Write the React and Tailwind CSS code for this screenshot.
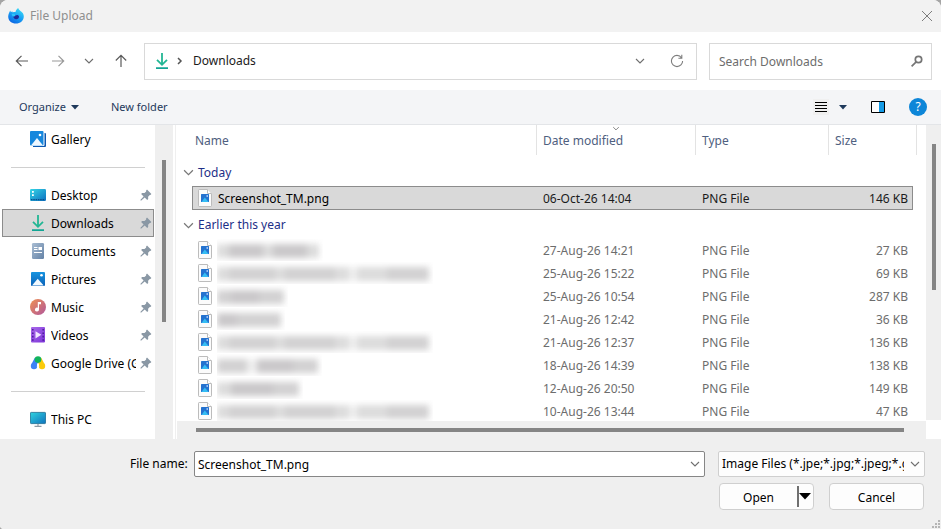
const pinned = [
  { name: 'Desktop', icon: DesktopIcon },
  { name: 'Downloads', icon: DownloadIcon, selected: true },
  { name: 'Documents', icon: DocumentsIcon },
  { name: 'Pictures', icon: PicturesIcon },
  { name: 'Music', icon: MusicIcon },
  { name: 'Videos', icon: VideosIcon },
  { name: 'Google Drive (G:)', icon: DriveIcon },
];

// Each obscured name is a run of smudges: [width, darkness level].
const long = [[12, 1], [46, 2], [10, 1], [50, 2], [14, 1], [8, 0], [30, 1], [42, 2]];
const files = [
  { smudge: [[12, 1], [34, 3], [10, 1], [34, 3], [12, 1]], date: '27-Aug-26 14:21', size: '27 KB' },
  { smudge: long, date: '25-Aug-26 15:22', size: '69 KB' },
  { smudge: [[14, 2], [28, 3], [25, 2]], date: '25-Aug-26 10:54', size: '287 KB' },
  { smudge: [[20, 3], [26, 2], [18, 2]], date: '21-Aug-26 12:42', size: '36 KB' },
  { smudge: long, date: '21-Aug-26 12:37', size: '136 KB' },
  { smudge: [[30, 2], [10, 0], [36, 3], [25, 2]], date: '18-Aug-26 14:39', size: '138 KB' },
  { smudge: [[14, 1], [42, 3], [26, 2]], date: '12-Aug-26 20:50', size: '149 KB' },
  { smudge: long, date: '10-Aug-26 13:44', size: '47 KB' },
];

const shades = ['bg-[#efefef]', 'bg-[#dcdcdc]', 'bg-[#d2d1d2]', 'bg-[#cac8ca]'];

function Chevron({ className = 'h-[10px] w-[10px]', stroke = '#6f6f6f' }) {
  return (
    <svg viewBox="0 0 10 10" className={className} fill="none" stroke={stroke} strokeWidth="1.1">
      <path d="M1 3l4 4 4-4" />
    </svg>
  );
}

function FirefoxIcon() {
  return (
    <svg viewBox="0 0 16 16" className="h-4 w-4">
      <defs>
        <linearGradient id="ff" x1="0.8" y1="0" x2="0.2" y2="1">
          <stop offset="0" stopColor="#3fe0f5" />
          <stop offset="0.5" stopColor="#18a0f5" />
          <stop offset="1" stopColor="#0a5fe0" />
        </linearGradient>
      </defs>
      <path d="M10.2 0c.3 1.200 1 1.800 2 2.700C14.500 4.300 16 6 15.800 8.800 15.500 13 12.200 15.600 8 15.600S.2 13 .2 8.500C.2 6 1.200 4.500 2.200 2.400l.7 1.900 1.300-1.100.6 1.300C5.500 4 6.300 3.900 7.500 4c.3-1.700 1.400-3 2.700-4z" fill="url(#ff)" />
      <path d="M5.200 7.500c.8-.5 1.800-.4 2.500.1 1-1 3-.5 3.300 1 .2 1.600-1.200 2.700-2.800 2.700-1.700 0-3-1.300-3-3.800z" fill="#1f2a98" />
      <path d="M3.700 6.200c1.600-.8 3-.4 3.700 1-.2.900-1 1.200-2 1.300-.9-.3-1.500-1-1.700-2.300z" fill="#2fc4f9" />
    </svg>
  );
}

function Arrow({ dir = 'left', stroke = '#5a5a5a' }) {
  const d = {
    left: 'M13 7H1.500M6.500 1.800L1.300 7l5.200 5.200',
    right: 'M1 7h11.500M7.500 1.800L12.700 7l-5.200 5.200',
    up: 'M7 13V1.500M1.800 6.500L7 1.300l5.200 5.200',
  }[dir];
  return (
    <svg viewBox="0 0 14 14" className="h-[14px] w-[14px]" fill="none" stroke={stroke} strokeWidth="1.2">
      <path d={d} />
    </svg>
  );
}

function DownloadIcon() {
  return (
    <svg viewBox="0 0 16 16" className="h-4 w-4" fill="none" stroke="#22b694" strokeWidth="1.8">
      <path d="M8 0v11.500M3 6.800l5 5 5-5" />
      <path d="M2 15.200h12" stroke="#12a594" />
    </svg>
  );
}

function GalleryIcon() {
  return (
    <svg viewBox="0 0 16 16" className="h-4 w-4">
      <path d="M4 2h11a1 1 0 011 1v12a1 1 0 01-1 1H3z" fill="#0b57b0" />
      <rect width="14.500" height="15" rx="1" fill="#fff" />
      <rect width="13.500" height="14.500" rx="1" fill="#1687dd" />
      <path d="M1 14.500L7 7l6 7.500z" fill="#eef7ff" />
      <circle cx="10" cy="4" r="1.300" fill="#fff" />
    </svg>
  );
}

function DesktopIcon() {
  return (
    <svg viewBox="0 0 16 16" className="h-4 w-4">
      <defs>
        <linearGradient id="desk" x1="0" y1="0" x2="1" y2="1">
          <stop offset="0" stopColor="#35d6e6" />
          <stop offset="1" stopColor="#0d6fc0" />
        </linearGradient>
      </defs>
      <rect y="2" width="16" height="12" rx="1.200" fill="url(#desk)" />
      <path d="M2 4h1.800v1.800H2zM2 7.200h1.800V9H2z" fill="#fff" />
      <path d="M1 12.600h14" stroke="#094f8c" strokeWidth="1.200" strokeDasharray="1.500 .8" />
    </svg>
  );
}

function DocumentsIcon() {
  return (
    <svg viewBox="0 0 16 16" className="h-4 w-4">
      <defs>
        <linearGradient id="docs" x1="0" y1="0" x2="1" y2="1">
          <stop offset="0" stopColor="#a9bdd3" />
          <stop offset="1" stopColor="#6482a6" />
        </linearGradient>
      </defs>
      <rect x="2" y="0" width="12" height="16" rx="1.200" fill="url(#docs)" />
      <path d="M4 4.500h3.500M4 6.500h3.500M4 9.500h8" stroke="#fff" strokeWidth="1" />
      <path d="M8.500 4H12v3H8.500z" fill="#fff" />
    </svg>
  );
}

function PicturesIcon() {
  return (
    <svg viewBox="0 0 16 16" className="h-4 w-4">
      <defs>
        <linearGradient id="pics" x1="0" y1="0" x2="0" y2="1">
          <stop offset="0" stopColor="#1794e0" />
          <stop offset="1" stopColor="#0b62b8" />
        </linearGradient>
      </defs>
      <rect x="1" y="1" width="14" height="14" rx="1" fill="url(#pics)" />
      <path d="M2 14.500l5.700-6.800 6 6.800z" fill="#f3faff" />
      <circle cx="11.500" cy="4.300" r="1.300" fill="#fff" />
    </svg>
  );
}

function MusicIcon() {
  return (
    <svg viewBox="0 0 16 16" className="h-4 w-4">
      <defs>
        <linearGradient id="music" x1="0" y1="0" x2="1" y2="1">
          <stop offset="0" stopColor="#f09252" />
          <stop offset="1" stopColor="#b0569b" />
        </linearGradient>
      </defs>
      <circle cx="8" cy="8" r="8" fill="url(#music)" />
      <path d="M7.800 3h3.200v2.200H9v5.300a2 2 0 11-1.200-1.800z" fill="#fff" />
    </svg>
  );
}

function VideosIcon() {
  return (
    <svg viewBox="0 0 16 16" className="h-4 w-4">
      <defs>
        <linearGradient id="vids" x1="0" y1="0" x2="1" y2="1">
          <stop offset="0" stopColor="#a868ea" />
          <stop offset="1" stopColor="#7d35d8" />
        </linearGradient>
      </defs>
      <rect x="1" y="0" width="14" height="15.500" rx="1" fill="url(#vids)" />
      <path d="M2.800 2v12M13.200 2v12" stroke="#4f1f9c" strokeWidth="1.600" strokeDasharray="1.600 1.800" />
      <path d="M5.500 4.200l5.800 3.600-5.800 3.600z" fill="#f1e6ff" />
    </svg>
  );
}

function DriveIcon() {
  return (
    <svg viewBox="0 0 16 16" className="h-4 w-4">
      <path d="M7 4L3.900 10" stroke="#3c82f6" strokeWidth="5" />
      <circle cx="4" cy="11" r="3.200" fill="#3c82f6" />
      <path d="M9 4l3.100 6" stroke="#fbcb0a" strokeWidth="5" />
      <circle cx="12" cy="11" r="3.200" fill="#fbcb0a" />
      <path d="M8 8l1.300 3.500H6.700z" fill="#fff" />
      <circle cx="8" cy="4.600" r="3.300" fill="#12b45b" />
    </svg>
  );
}

function PcIcon() {
  return (
    <svg viewBox="0 0 16 16" className="h-4 w-4">
      <defs>
        <linearGradient id="pc" x1="0" y1="0" x2="1" y2="1">
          <stop offset="0" stopColor="#2fd3df" />
          <stop offset="1" stopColor="#0f72bd" />
        </linearGradient>
      </defs>
      <rect x=".4" y="1.400" width="15.200" height="11.200" rx=".8" fill="url(#pc)" stroke="#17698f" strokeWidth=".8" />
      <path d="M8 13v2M4.500 15.400h7" stroke="#8d9aa5" strokeWidth="1.200" />
    </svg>
  );
}

function PinIcon() {
  return (
    <svg viewBox="0 0 12 12" className="h-3 w-3 shrink-0" fill="#8a98a5">
      <path d="M7 .6l4.400 4.400-1 1-.6-.1-1.700 1.800.1 2.300-1 1L4.700 8.500 1 11.800l-.7-.7 3.300-3.600L1.100 5l1-1 2.400.1 1.700-1.700-.2-.7z" />
    </svg>
  );
}

function PngIcon() {
  return (
    <svg viewBox="0 0 14 18" className="h-[18px] w-[14px] shrink-0">
      <path d="M.5 1.200c0-.4.3-.7.7-.7h8l4.300 4.300v12c0 .4-.3.7-.7.7H1.200c-.4 0-.7-.3-.7-.7z" fill="#fbfbfb" stroke="#bcbcbc" />
      <path d="M9.500.5v4h4" fill="#fff" stroke="#bcbcbc" />
      <rect x="3" y="5" width="8" height="8" rx=".6" fill="#2472cf" />
      <path d="M3.500 13L6.800 8.500l3.800 4.500z" fill="#35bdf3" />
      <path d="M8.500 6.300H10v1.400H8.500z" fill="#c7dcff" />
    </svg>
  );
}

function SideItem({ icon: Icon, name, selected, pin }) {
  return (
    <li className="pl-[2px] pr-px">
      <button
        className={
          'flex h-7 w-full items-center border pl-[27px] pr-px text-left ' +
          (selected ? 'border-[#8c8c8c] bg-[#d9d9d9]' : 'border-transparent')
        }
      >
        <Icon />
        <span className="ml-[5px] mr-1 min-w-0 flex-1 overflow-hidden whitespace-nowrap pt-[2px]">{name}</span>
        {pin && <PinIcon />}
      </button>
    </li>
  );
}

function GroupRow({ children, className }) {
  return (
    <tr>
      <th colSpan={6} className={'p-0 pl-[6px] text-left font-normal text-[#1d2f87] ' + className}>
        <button className="flex items-center gap-1">
          <Chevron className="h-[11px] w-[11px]" stroke="#777" />
          {children}
        </button>
      </th>
    </tr>
  );
}

export default function App() {
  return (
    <div className="h-screen bg-[#a5a5a5] font-['Noto_Sans','Open_Sans',sans-serif] text-[12px] leading-4 text-black">
      <div className="flex h-full flex-col overflow-hidden rounded-t-lg rounded-bl bg-white">
        <header className="flex h-8 shrink-0 items-center bg-[#f2f2f2] pl-2 pr-[6px]">
          <FirefoxIcon />
          <h1 className="ml-[6px] flex-1 text-[#8f8f8f]">File Upload</h1>
          <button aria-label="Close" className="flex h-4 w-4 items-center justify-center">
            <svg viewBox="0 0 12 12" className="h-3 w-3" stroke="#7d7d7d" strokeWidth="1"><path d="M1 1l10 10M11 1L1 11" /></svg>
          </button>
        </header>

        <nav className="flex h-[58px] shrink-0 items-center pl-[15px] pr-[9px]">
          <button aria-label="Back"><Arrow /></button>
          <button aria-label="Forward" className="ml-[22px]"><Arrow dir="right" stroke="#9a9a9a" /></button>
          <button aria-label="Recent locations" className="ml-[19px]"><Chevron /></button>
          <button aria-label="Up" className="ml-[20px]"><Arrow dir="up" /></button>
          <div className="ml-4 flex h-[37px] min-w-0 flex-1 items-center border border-[#d9d9d9] pl-[9px] pr-3">
            <DownloadIcon />
            <svg viewBox="0 0 6 8" className="ml-[7px] h-2 w-[6px]" fill="none" stroke="#555" strokeWidth="1.500"><path d="M1 1l3 3-3 3" /></svg>
            <button className="ml-[10px] text-[#1b1b1b]">Downloads</button>
            <span className="flex-1" />
            <button aria-label="Previous locations"><Chevron /></button>
            <button aria-label="Refresh" className="ml-[25px]">
              <svg viewBox="0 0 14 14" className="h-[14px] w-[14px]" fill="none" stroke="#7d7d7d" strokeWidth="1.100">
                <path d="M12.600 7A5.600 5.600 0 117 1.400c2 0 3.600 1 4.600 2.600M11.800.8v3.400H8.400" />
              </svg>
            </button>
          </div>
          <div className="ml-3 flex h-[37px] w-[223px] items-center border border-[#d9d9d9] pl-[9px] pr-2">
            <input aria-label="Search Downloads" placeholder="Search Downloads" className="min-w-0 flex-1 pt-[2px] outline-none placeholder:text-[#6d6d6d]" />
            <svg viewBox="0 0 12 12" className="h-3 w-3" fill="none" stroke="#757575" strokeWidth="1.700"><circle cx="7.500" cy="4.500" r="3.200" /><path d="M5.200 6.800L.6 11.400" /></svg>
          </div>
        </nav>

        <div className="flex h-[35px] shrink-0 items-center border-b border-[#e3e5e8] bg-[#f4f5f7] pl-[19px] pr-[14px] text-[11px] text-[#1e395b]">
          <button className="flex items-center gap-[5px]">
            Organize
            <svg viewBox="0 0 8 5" className="h-[5px] w-2" fill="#1e395b"><path d="M0 0h8L4 4.500z" /></svg>
          </button>
          <button className="ml-8">New folder</button>
          <span className="flex-1" />
          <button aria-label="View" className="flex h-4 w-4 items-center justify-center bg-[#f0f0f0]">
            <svg viewBox="0 0 12 11" className="h-[11px] w-3" stroke="#000"><path d="M0 .5h12M0 3.500h12M0 6.500h12M0 9.500h12" /></svg>
          </button>
          <button aria-label="More view options" className="ml-[10px]">
            <svg viewBox="0 0 8 5" className="h-[5px] w-2" fill="#1e395b"><path d="M0 0h8L4 4.500z" /></svg>
          </button>
          <button aria-label="Preview pane" className="ml-[24px]">
            <svg viewBox="0 0 14 12" className="h-3 w-[14px]"><path d="M.5.5h13v11H.5z" fill="#fff" stroke="#000" /><path d="M8 1h5v10H8z" fill="#159be6" /></svg>
          </button>
          <button aria-label="Help" className="ml-6 flex h-[18px] w-[18px] items-center justify-center rounded-full bg-[#0d86d8] text-[12px] text-white">?</button>
        </div>

        <main className="flex min-h-0 flex-1">
          <aside className="w-[155px] shrink-0 overflow-hidden">
            <ul>
              <SideItem icon={GalleryIcon} name="Gallery" />
              <li className="flex h-7 items-center pl-[11px] pr-[10px]"><hr className="w-full border-[#d0d0d0]" /></li>
              {pinned.map((p) => <SideItem key={p.name} {...p} pin />)}
              <li className="flex h-7 items-center pl-[11px] pr-[10px]"><hr className="w-full border-[#d0d0d0]" /></li>
              <SideItem icon={PcIcon} name="This PC" />
            </ul>
          </aside>
          <div className="flex w-[18px] shrink-0 justify-center bg-[#efefef] pt-[35px]">
            <div className="h-[162px] w-1 bg-[#858585]" />
          </div>
          <div className="mr-px w-[3px] shrink-0 border-r border-[#efefef]" />

          <section className="flex min-w-0 flex-1 flex-col">
            <div className="min-h-0 flex-1 overflow-hidden pr-[9px]">
              <table className="w-full table-fixed border-separate border-spacing-0">
                <colgroup>
                  <col className="w-[15px]" />
                  <col />
                  <col className="w-[159px]" />
                  <col className="w-[133px]" />
                  <col className="w-[84px]" />
                  <col className="w-1" />
                </colgroup>
                <thead>
                  <tr className="h-[30px] text-left text-[#4f6080]">
                    <th className="p-0" />
                    <th className="border-r border-[#e3e3e3] p-0 pl-[3px] pt-[2px] font-normal">Name</th>
                    <th className="relative border-r border-[#e3e3e3] p-0 pl-[6px] pt-[2px] font-normal">
                      Date modified
                      <span className="absolute left-1/2 top-0 -translate-x-1/2"><Chevron className="h-[7px] w-[7px]" stroke="#666" /></span>
                    </th>
                    <th className="border-r border-[#e3e3e3] p-0 pl-[6px] pt-[2px] font-normal">Type</th>
                    <th className="p-0 pl-[6px] pt-[2px] font-normal">Size</th>
                    <th className="border-r border-[#e3e3e3] p-0" />
                  </tr>
                </thead>
                <tbody>
                  <GroupRow className="h-[31px] pt-1">Today</GroupRow>
                  <tr className="h-6 text-[#1b1b1b] [&>.sel]:border-y [&>.sel]:border-[#8c8c8c] [&>.sel]:bg-[#d9d9d9]">
                    <td className="p-0" />
                    <td className="sel border-l p-0 pl-[5px]">
                      <div className="flex items-center gap-[6px] text-black"><PngIcon /><span className="pt-[2px]">Screenshot_TM.png</span></div>
                    </td>
                    <td className="sel p-0 pl-[6px] pt-[2px]">06-Oct-26 14:04</td>
                    <td className="sel p-0 pl-[6px] pt-[2px]">PNG File</td>
                    <td className="sel border-r p-0 pr-1 pt-[2px] text-right">146 KB</td>
                    <td className="p-0" />
                  </tr>
                  <GroupRow className="h-[28px] pt-[2px]">Earlier this year</GroupRow>
                  {files.map((f) => (
                    <tr key={f.date} className="h-[23px] text-[#6d6d6d]">
                      <td className="p-0" />
                      <td className="p-0 pl-[6px]">
                        <div className="flex items-center gap-[5px]">
                          <PngIcon />
                          <span className="overflow-hidden pb-[2px] pr-1 pt-1">
                            <span className="flex h-[16px] items-center blur-[3px]">
                              {f.smudge.map(([w, level], i) => (
                                <span key={i} className={'h-[14px] ' + shades[level]} style={{ width: w }} />
                              ))}
                            </span>
                          </span>
                        </div>
                      </td>
                      <td className="p-0 pl-[6px] pt-[2px]">{f.date}</td>
                      <td className="p-0 pl-[6px] pt-[2px]">PNG File</td>
                      <td className="p-0 pr-[5px] pt-[2px] text-right">{f.size}</td>
                      <td className="p-0" />
                    </tr>
                  ))}
                </tbody>
              </table>
            </div>
            <div className="flex h-[18px] shrink-0 items-center bg-[#efefef] pl-[19px] pr-[22px]">
              <div className="h-1 w-full bg-[#858585]" />
            </div>
          </section>
          <div className="mb-[19px] flex w-[15px] shrink-0 justify-center bg-[#efefef] pl-px pt-[19px]">
            <div className="h-[146px] w-1 bg-[#858585]" />
          </div>
        </main>

        <footer className="relative shrink-0 bg-[#efefef] pb-[19px] pl-[130px] pr-4 pt-3">
          <div className="flex items-center">
            <label htmlFor="filename" className="w-16 whitespace-nowrap">File name:</label>
            <div className="flex h-[26px] min-w-0 flex-1 items-center rounded-xs border border-[#868686] bg-white pl-[3px] pr-1">
              <input id="filename" defaultValue="Screenshot_TM.png" className="min-w-0 flex-1 pt-[2px] outline-none" />
              <button aria-label="Recent file names"><Chevron /></button>
            </div>
            <div className="relative ml-[13px] w-[207px]">
              <select aria-label="File type" className="block h-[26px] w-full appearance-none rounded-xs border border-[#cfcfcf] bg-[#fdfdfd] pl-[3px] pr-5 outline-none">
                <option>Image Files (*.jpe;*.jpg;*.jpeg;*.gif;*.png)</option>
              </select>
              <span className="pointer-events-none absolute right-[5px] top-2"><Chevron /></span>
            </div>
          </div>
          <div className="mt-[6px] flex justify-end gap-[15px] pr-px">
            <div className="flex h-[27px] w-[95px] items-center rounded border border-[#cfcfcf] bg-[#fdfdfd]">
              <button className="flex-1 pt-[2px]">Open</button>
              <button aria-label="Open options" className="flex h-[21px] w-4 items-center border-l-2 border-[#707070]">
                <svg viewBox="0 0 12 7" className="h-[7px] w-3"><path d="M0 0h12L6 6.500z" /></svg>
              </button>
            </div>
            <button className="h-[27px] w-[95px] rounded border border-[#cfcfcf] bg-[#fdfdfd] pt-[2px]">Cancel</button>
          </div>
          <svg viewBox="0 0 9 9" className="absolute bottom-0 right-0 h-[9px] w-[9px]" fill="#b5b5b5">
            <path d="M6 0h2v2H6zM3 3h2v2H3zM6 3h2v2H6zM0 6h2v2H0zM3 6h2v2H3zM6 6h2v2H6z" />
          </svg>
        </footer>
      </div>
    </div>
  );
}
